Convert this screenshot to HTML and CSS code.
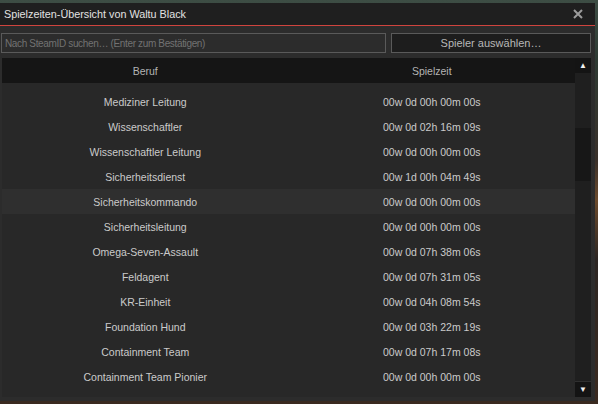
FILE: index.html
```html
<!DOCTYPE html>
<html lang="de">
<head>
  <meta charset="UTF-8">
  <title>Spielzeiten</title>
  <link rel="stylesheet" href="styles.css">
</head>
<body>

  <div class="frame">
    <div class="titlebar">
      <span class="title">Spielzeiten-Übersicht von Waltu Black</span>
      <svg class="close" width="10" height="10" viewBox="0 0 10 10">
        <path d="M1 1 L9 9 M9 1 L1 9" stroke="#9c9c9c" stroke-width="2" fill="none"/>
      </svg>
    </div>

    <div class="content">
      <div class="toolbar">
        <input type="text" class="search" placeholder="Nach SteamID suchen… (Enter zum Bestätigen)" />
        <button class="pick">Spieler auswählen…</button>
      </div>

      <div class="list">
        <div class="list-main">
          <div class="list-head">
            <div>Beruf</div>
            <div>Spielzeit</div>
          </div>
          <div class="list-body">
            <div class="rows" id="rows"></div>
          </div>
        </div>
        <div class="scrollbar">
          <div class="scroll-btn up">&#9650;</div>
          <div class="track">
            <div class="grip"></div>
          </div>
          <div class="scroll-btn down">&#9660;</div>
        </div>
      </div>
    </div>
  </div>

  <script>
    const jobs = [
      ["Mediziner Leitung", "00w 0d 00h 00m 00s"],
      ["Wissenschaftler", "00w 0d 02h 16m 09s"],
      ["Wissenschaftler Leitung", "00w 0d 00h 00m 00s"],
      ["Sicherheitsdienst", "00w 1d 00h 04m 49s"],
      ["Sicherheitskommando", "00w 0d 00h 00m 00s"],
      ["Sicherheitsleitung", "00w 0d 00h 00m 00s"],
      ["Omega-Seven-Assault", "00w 0d 07h 38m 06s"],
      ["Feldagent", "00w 0d 07h 31m 05s"],
      ["KR-Einheit", "00w 0d 04h 08m 54s"],
      ["Foundation Hund", "00w 0d 03h 22m 19s"],
      ["Containment Team", "00w 0d 07h 17m 08s"],
      ["Containment Team Pionier", "00w 0d 00h 00m 00s"]
    ];

    const rows = document.getElementById("rows");
    jobs.forEach(function(job, index) {
      const hover = index === 4 ? " hover" : "";
      rows.innerHTML += `
        <div class="row${hover}">
          <div>${job[0]}</div>
          <div>${job[1]}</div>
        </div>
      `;
    });
  </script>

</body>
</html>
```

FILE: styles.css
```css
body {
  margin: 0;
  width: 598px;
  height: 404px;
  overflow: hidden;
  font-family: "Liberation Sans", Arial, sans-serif;
  font-size: 10.5px;
  background: linear-gradient(180deg, #3d4d44 0px, #2e3a33 60px, #39302a 160px, #6b4a2c 200px, #2b2522 260px, #3a2a20 404px);
}

.frame {
  margin-top: 3px;
  width: 595px;
  height: 398px;
  background: #2c2c2c;
  display: flex;
  flex-direction: column;
}

.titlebar {
  height: 22px;
  background: #1f1f1f;
  border-bottom: 1px solid #d0443e;
  display: flex;
  align-items: center;
  justify-content: space-between;
  padding: 0 12px 0 4px;
}

.title {
  color: #e2e2e2;
  font-family: "Liberation Sans Narrow", "Liberation Sans", sans-serif;
  font-size: 10.8px;
}

.content {
  flex: 1;
  display: flex;
  flex-direction: column;
  padding: 7px 4px 4px 1px;
  min-height: 0;
}

.toolbar { display: flex; gap: 5px; height: 20px; }

.search {
  width: 385px;
  box-sizing: border-box;
  margin: 0;
  padding: 0 3px;
  background: #2c2c2c;
  border: 1px solid #5a5a5a;
  color: #ccc;
  font: inherit;
  font-size: 10px;
  letter-spacing: -0.35px;
  outline: none;
}
.search::placeholder { color: #727272; }

.pick {
  width: 200px;
  margin: 0;
  background: #1d1d1d;
  border: 1px solid #5a5a5a;
  color: #b8b8b8;
  font: inherit;
  font-size: 11px;
}

.list {
  margin-top: 5px;
  margin-left: 1px;
  flex: 1;
  display: flex;
  min-height: 0;
  background: #282828;
}

.list-main { flex: 1; display: flex; flex-direction: column; min-height: 0; }

.list-head {
  height: 25px;
  background: #151515;
  display: grid;
  grid-template-columns: 1fr 1fr;
  align-items: center;
  text-align: center;
  color: #b4b4b4;
}

.list-body { flex: 1; overflow: hidden; }
.rows { padding-top: 6px; }

.row {
  height: 25px;
  display: grid;
  grid-template-columns: 1fr 1fr;
  align-items: center;
  text-align: center;
  color: #cbcbcb;
}
.row.hover { background: #2f2f2f; }

.scrollbar { width: 16px; display: flex; flex-direction: column; background: #1f1f1f; }
.scroll-btn {
  height: 15px;
  background: #141414;
  color: #f0f0f0;
  font-size: 8px;
  line-height: 15px;
  text-align: center;
}
.scroll-btn.down { border-top: 1px solid #303030; }
.track { flex: 1; padding-top: 55px; }
.grip { height: 53px; background: #171717; }
```
